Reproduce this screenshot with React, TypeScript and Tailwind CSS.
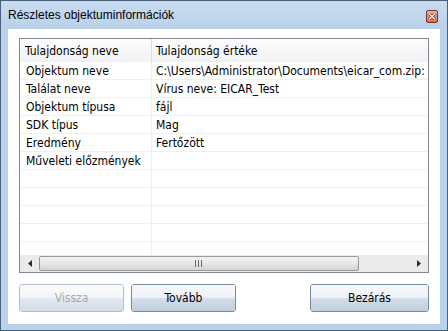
import React from "react";

const rows: [string, string][] = [
  ["Objektum neve", "C:\\Users\\Administrator\\Documents\\eicar_com.zip:"],
  ["Találat neve", "Vírus neve: EICAR_Test"],
  ["Objektum típusa", "fájl"],
  ["SDK típus", "Mag"],
  ["Eredmény", "Fertőzött"],
  ["Műveleti előzmények", ""],
  ["", ""],
  ["", ""],
  ["", ""],
  ["", ""],
  ["", ""],
];

function WinButton({ label, disabled }: { label: string; disabled?: boolean }) {
  return (
    <div
      className={
        "relative flex h-[28px] items-center justify-center overflow-hidden rounded-[3px] border " +
        (disabled ? "border-[#b4bfcc]" : "border-[#7a8ba0]")
      }
    >
      <div className="absolute inset-0 flex flex-col">
        <div
          className={
            "h-1/2 " +
            (disabled
              ? "bg-gradient-to-b from-[#fafbfc] to-[#f2f5f8]"
              : "bg-gradient-to-b from-[#f7f9fb] to-[#edf1f6]")
          }
        />
        <div
          className={
            "h-1/2 " +
            (disabled
              ? "bg-gradient-to-b from-[#e3e9f0] to-[#d3dce7]"
              : "bg-gradient-to-b from-[#d6dfea] to-[#c1cedd]")
          }
        />
      </div>
      <span className={"relative " + (disabled ? "text-[#a3a8ae]" : "text-black")}>{label}</span>
    </div>
  );
}

export default function App() {
  return (
    <div
      className="flex h-[331px] w-[448px] flex-col border border-[#4a5f78] bg-[#b9d1ea] text-[12px] text-black"
      style={{ fontFamily: "'DejaVu Sans Condensed', 'DejaVu Sans', sans-serif" }}
    >
      {/* title bar */}
      <div className="flex h-[28px] items-center justify-between bg-gradient-to-b from-[#c8dcf1] to-[#b9d1ea] pl-[7px] pr-[9px]">
        <span className="text-[12px]" style={{ fontFamily: "'Liberation Sans', sans-serif" }}>
          Részletes objektuminformációk
        </span>
        <div className="mt-[3px] flex h-[13px] w-[12px] items-center justify-center rounded-[2px] border border-[#8a2f22] bg-gradient-to-b from-[#f0b4a6] to-[#d2695a]">
          <svg width="8" height="7" viewBox="0 0 8 7">
            <path d="M1 0.5 L7 6.5 M7 0.5 L1 6.5" stroke="#6a2219" strokeWidth="2.6" />
            <path d="M1 0.5 L7 6.5 M7 0.5 L1 6.5" stroke="#ffffff" strokeWidth="1.4" />
          </svg>
        </div>
      </div>

      {/* client area */}
      <div className="mx-[7px] mb-[6px] flex flex-1 flex-col bg-white px-[11px] pt-[9px] pb-[11px]">
        <div className="flex h-[235px] flex-col border border-[#828790]">
          {/* header */}
          <div className="flex h-[23px] shrink-0 bg-gradient-to-b from-[#fcfcfc] to-[#f1f2f3]">
            <div className="flex w-[132px] items-center border-r border-[#dadcde] pl-[5px]">Tulajdonság neve</div>
            <div className="flex items-center pl-[4px]">Tulajdonság értéke</div>
          </div>
          {/* rows */}
          <div className="flex-1 overflow-hidden px-[1px]">
            {rows.map(([k, v], i) => (
              <div key={i} className="flex h-[18px] border-b border-[#f0f0f0]">
                <div className="flex w-[131px] items-center border-r border-[#f0f0f0] pl-[5px] whitespace-nowrap">{k}</div>
                <div className="flex items-center overflow-hidden pl-[4px] whitespace-nowrap">{v}</div>
              </div>
            ))}
          </div>
          {/* horizontal scrollbar */}
          <div className="flex h-[17px] shrink-0 items-center bg-[#ebebeb]">
            <div className="flex w-[19px] items-center justify-center">
              <svg width="4" height="7" viewBox="0 0 4 7">
                <path d="M4 0 L0 3.5 L4 7 Z" fill="#2b2b2b" />
              </svg>
            </div>
            <div className="flex h-[15px] w-[320px] items-center justify-center rounded-[2px] border border-[#9a9a9a] bg-gradient-to-b from-[#f3f3f3] via-[#e6e6e6] to-[#d4d4d4]">
              <svg width="8" height="7" viewBox="0 0 8 7">
                <path d="M0.5 0 V7 M3.5 0 V7 M6.5 0 V7" stroke="#6a6a6a" strokeWidth="1" />
              </svg>
            </div>
            <div className="flex-1" />
            <div className="flex w-[19px] items-center justify-center">
              <svg width="4" height="7" viewBox="0 0 4 7">
                <path d="M0 0 L4 3.5 L0 7 Z" fill="#2b2b2b" />
              </svg>
            </div>
          </div>
        </div>

        {/* buttons */}
        <div className="mt-[11px] flex">
          <div className="w-[105px]">
            <WinButton label="Vissza" disabled />
          </div>
          <div className="ml-[7px] w-[105px]">
            <WinButton label="Tovább" />
          </div>
          <div className="flex-1" />
          <div className="w-[119px]">
            <WinButton label="Bezárás" />
          </div>
        </div>
      </div>
    </div>
  );
}
